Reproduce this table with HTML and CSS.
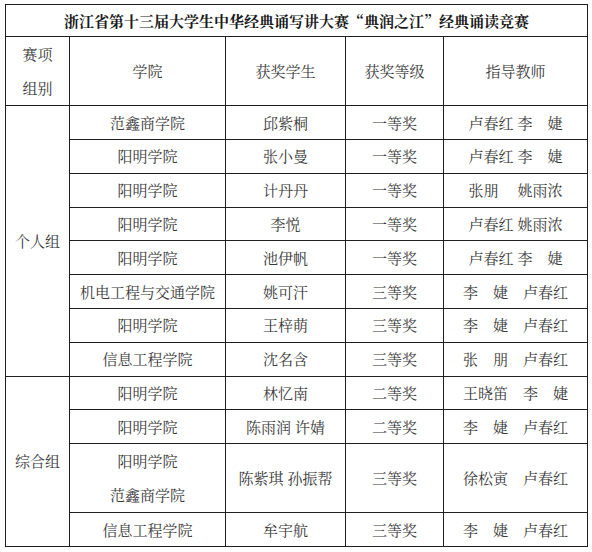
FILE: index.html
```html
<!DOCTYPE html>
<html lang="zh-CN">
<head>
<meta charset="utf-8">
<link rel="stylesheet" href="styles.css">
</head>
<body>
<table class="awards">
  <colgroup>
    <col class="c-group">
    <col class="c-college">
    <col class="c-student">
    <col class="c-level">
    <col class="c-teacher">
  </colgroup>
  <tr class="title-row"><td colspan="5" class="title">浙江省第十三届大学生中华经典诵写讲大赛“典润之江”经典诵读竞赛</td></tr>
  <tr class="head-row">
    <td class="two-line">赛项<br>组别</td>
    <td>学院</td>
    <td>获奖学生</td>
    <td>获奖等级</td>
    <td>指导教师</td>
  </tr>
  <tr><td rowspan="8">个人组</td><td>范鑫商学院</td><td>邱紫桐</td><td>一等奖</td><td class="t">卢春红 李　婕</td></tr>
  <tr><td>阳明学院</td><td>张小曼</td><td>一等奖</td><td class="t">卢春红 李　婕</td></tr>
  <tr><td>阳明学院</td><td>计丹丹</td><td>一等奖</td><td class="t">张朋　 姚雨浓</td></tr>
  <tr><td>阳明学院</td><td>李悦</td><td>一等奖</td><td class="t">卢春红 姚雨浓</td></tr>
  <tr><td>阳明学院</td><td>池伊帆</td><td>一等奖</td><td class="t">卢春红 李　婕</td></tr>
  <tr><td>机电工程与交通学院</td><td>姚可汗</td><td>三等奖</td><td class="t">李　婕　卢春红</td></tr>
  <tr><td>阳明学院</td><td>王梓萌</td><td>三等奖</td><td class="t">李　婕　卢春红</td></tr>
  <tr><td>信息工程学院</td><td>沈名含</td><td>三等奖</td><td class="t">张　朋　卢春红</td></tr>
  <tr><td rowspan="5">综合组</td><td>阳明学院</td><td>林忆南</td><td>二等奖</td><td class="t">王晓笛　李　婕</td></tr>
  <tr><td>阳明学院</td><td class="t">陈雨润 许婧</td><td>二等奖</td><td class="t">李　婕　卢春红</td></tr>
  <tr class="double"><td class="two-line">阳明学院<br>范鑫商学院</td><td class="t">陈紫琪 孙振帮</td><td>三等奖</td><td class="t">徐松寅　卢春红</td></tr>
  <tr><td>信息工程学院</td><td>牟宇航</td><td>三等奖</td><td class="t">李　婕　卢春红</td></tr>
</table>
</body>
</html>
```
FILE: styles.css
```css
html, body {
  margin: 0;
  padding: 0;
  background: #fff;
}
body {
  padding: 4px 0 0 5px;
  font-family: "Noto Serif CJK SC", "Noto Sans CJK SC", serif;
  color: #3a3a3a;
  font-size: 15px;
}
.awards {
  border-collapse: collapse;
  table-layout: fixed;
  width: 583px;
}
.c-group { width: 64px; }
.c-college { width: 156px; }
.c-student { width: 120px; }
.c-level { width: 98px; }
.c-teacher { width: 144px; }
.awards td {
  border: 1px solid #1e1e1e;
  padding: 0;
  height: 32.8px;
  text-align: center;
  vertical-align: middle;
  line-height: 20px;
  white-space: nowrap;
}
.awards .t {
  white-space: pre;
}
.title-row td {
  height: 31.3px;
}
.title {
  font-weight: bold;
  color: #1a1a1a;
}
.head-row td {
  height: 67.3px;
}
.awards .two-line {
  line-height: 34px;
}
.double td {
  height: 65.5px;
}
```
